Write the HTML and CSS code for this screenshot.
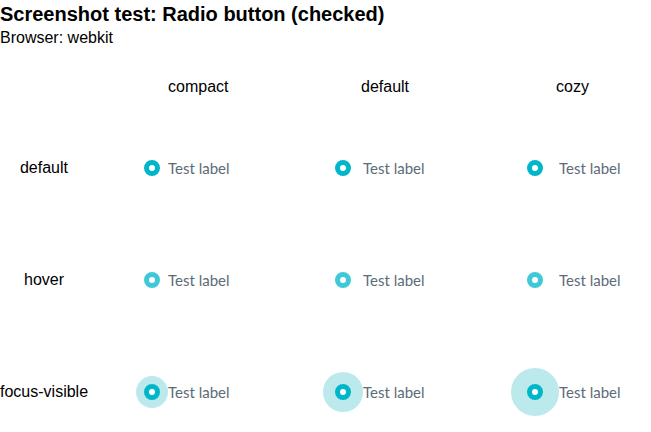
FILE: index.html
```html
<!DOCTYPE html>
<html>
<head>
<meta charset="utf-8">
<link rel="stylesheet" href="styles.css">
</head>
<body>
<h1 class="title">Screenshot test: Radio button (checked)</h1>
<p class="subtitle">Browser: webkit</p>

<div class="grid head">
  <div class="rowlabel"></div>
  <div class="colhead c-compact">compact</div>
  <div class="colhead c-default">default</div>
  <div class="colhead c-cozy">cozy</div>
</div>

<div class="grid body">
  <div class="rowlabel">default</div>
  <div class="cell"><span class="radio compact"><span class="dot"></span></span><span class="label">Test label</span></div>
  <div class="cell"><span class="radio normal"><span class="dot"></span></span><span class="label">Test label</span></div>
  <div class="cell"><span class="radio cozy"><span class="dot"></span></span><span class="label">Test label</span></div>

  <div class="rowlabel">hover</div>
  <div class="cell"><span class="radio compact hover"><span class="dot"></span></span><span class="label">Test label</span></div>
  <div class="cell"><span class="radio normal hover"><span class="dot"></span></span><span class="label">Test label</span></div>
  <div class="cell"><span class="radio cozy hover"><span class="dot"></span></span><span class="label">Test label</span></div>

  <div class="rowlabel">focus-visible</div>
  <div class="cell"><span class="radio compact focus"><span class="halo"></span><span class="dot"></span></span><span class="label">Test label</span></div>
  <div class="cell"><span class="radio normal focus"><span class="halo"></span><span class="dot"></span></span><span class="label">Test label</span></div>
  <div class="cell"><span class="radio cozy focus"><span class="halo"></span><span class="dot"></span></span><span class="label">Test label</span></div>
</div>
</body>
</html>
```

FILE: styles.css
```css
html, body {
  margin: 0;
  padding: 0;
}
body {
  font-family: "Liberation Sans", Arial, sans-serif;
  color: #000;
  width: 651px;
  height: 432px;
  overflow: hidden;
}
.title {
  margin: 0;
  font-size: 20px;
  line-height: 29px;
  font-weight: bold;
}
.subtitle {
  margin: 0;
  font-size: 16px;
  line-height: 18px;
}
.grid {
  display: grid;
  grid-template-columns: 88px 187px 188px 188px;
}
.head {
  margin-top: 16px;
  grid-template-rows: 48px;
}
.body {
  margin-top: 33px;
  grid-template-rows: 48px 48px 48px;
  row-gap: 64px;
}
.rowlabel {
  font-size: 16px;
  line-height: 18px;
  text-align: center;
  align-self: center;
  white-space: nowrap;
}
.colhead {
  font-size: 16px;
  line-height: 18px;
  align-self: center;
  white-space: nowrap;
}
.c-compact { padding-left: 80px; }
.c-default { padding-left: 86px; }
.c-cozy { padding-left: 93px; }

.cell {
  display: flex;
  align-items: center;
  padding-left: 48px;
}
.radio {
  position: relative;
  display: flex;
  align-items: center;
  justify-content: center;
  height: 48px;
  flex: none;
}
.radio.compact { width: 32px; }
.radio.normal { width: 40px; }
.radio.cozy { width: 48px; }

.dot {
  position: relative;
  box-sizing: border-box;
  width: 16px;
  height: 16px;
  border-radius: 50%;
  border: 5px solid #00b6c8;
  background: #fff;
}
.hover .dot {
  border-color: #40c8d6;
}
.halo {
  position: absolute;
  left: 50%;
  top: 50%;
  border-radius: 50%;
  background: #bbe9ec;
  transform: translate(-50%, -50%);
}
.compact .halo { width: 32px; height: 32px; }
.normal .halo { width: 40px; height: 40px; }
.cozy .halo { width: 48px; height: 48px; }

.label {
  font-family: "Lato", "Noto Sans", sans-serif;
  font-size: 15px;
  line-height: 18px;
  color: #5b6b77;
}
```
